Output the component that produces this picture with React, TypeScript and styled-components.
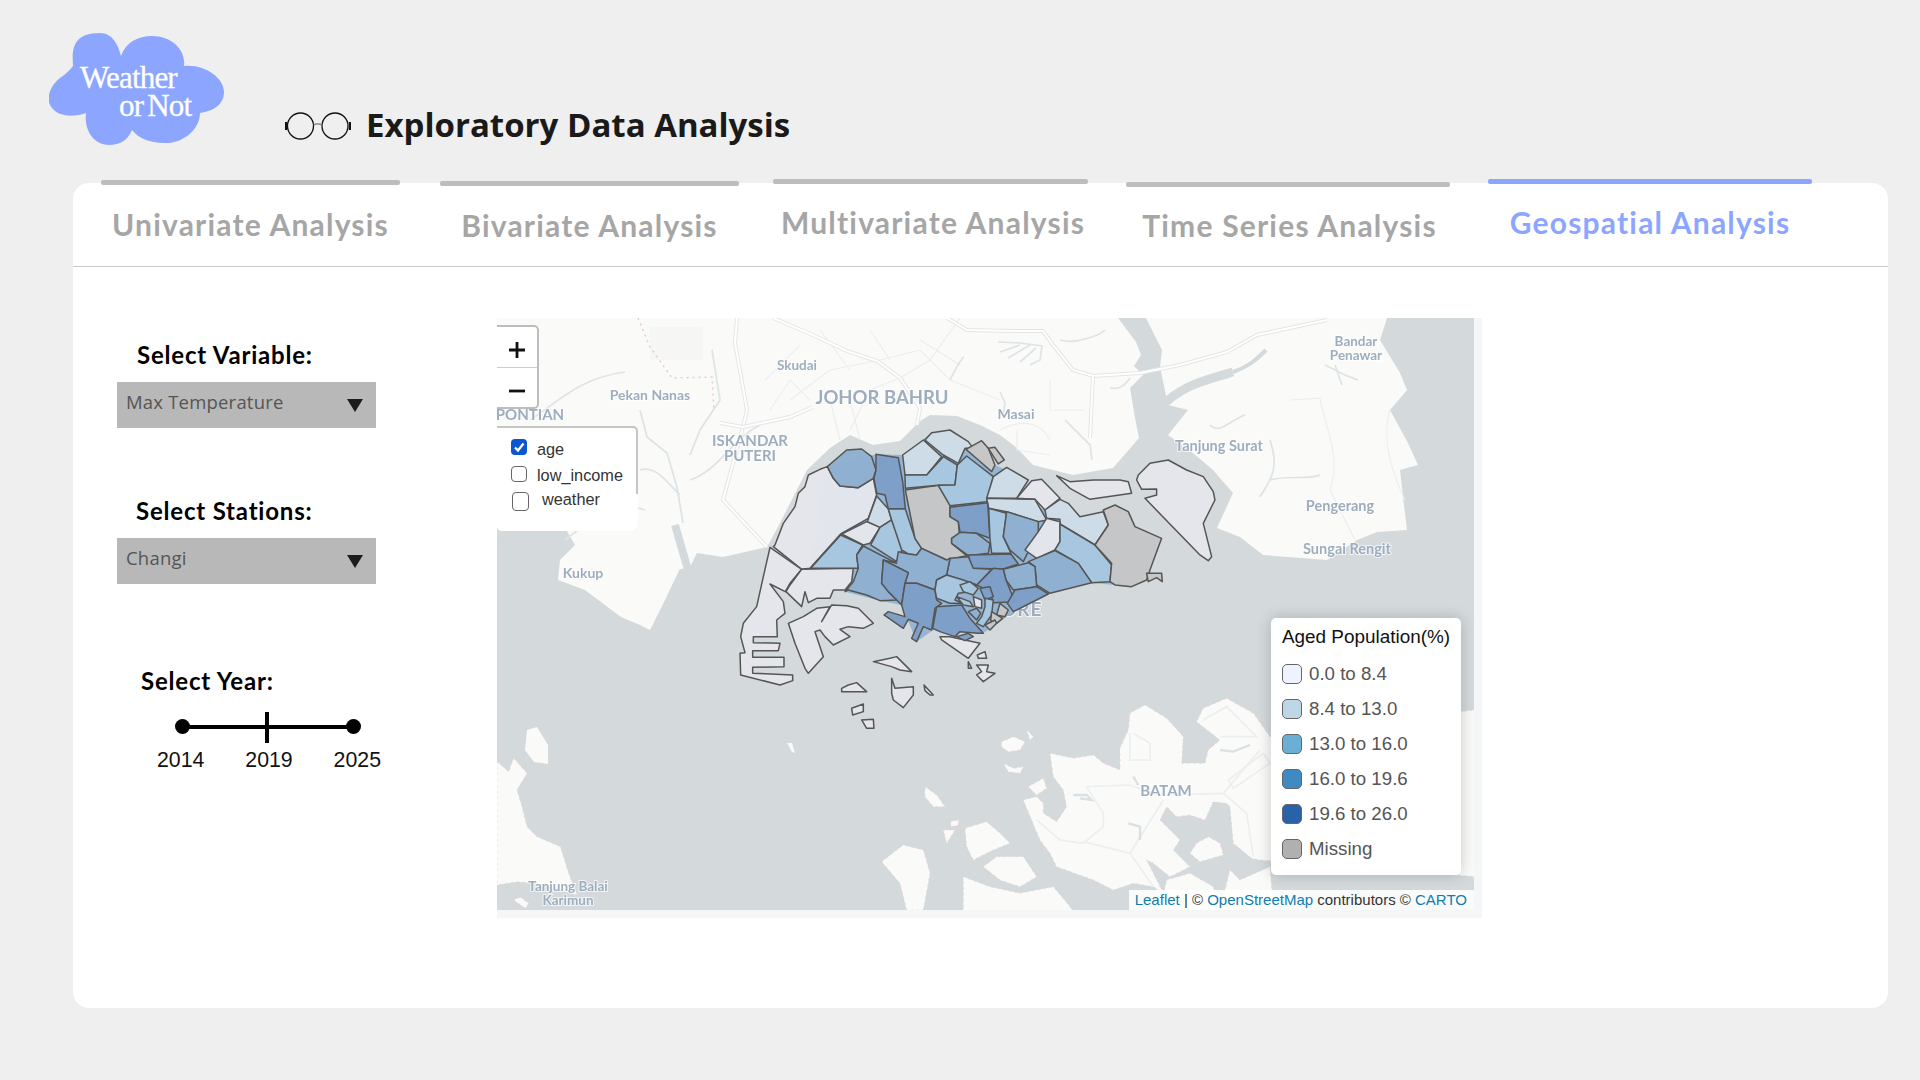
import React from 'react'
import styled, { createGlobalStyle } from 'styled-components'

const GlobalStyle = createGlobalStyle`
  html, body {
    margin: 0;
    padding: 0;
    background: #efefef;
  }
`

const Page = styled.div`
  width: 1920px;
  height: 1080px;
  overflow: hidden;
  background: #efefef;
  font-family: Lato, sans-serif;
`

const Header = styled.header`
  display: flex;
  align-items: flex-start;
  height: 183px;
  padding: 33px 0 0 49px;
  box-sizing: border-box;
`

const Logo = styled.div`
  position: relative;
  width: 175px;
  height: 112px;
  flex: none;

  svg {
    display: block;
  }
`

const LogoText = styled.div`
  position: absolute;
  left: 31px;
  top: 31px;
  color: #fff;
  font-family: 'Liberation Serif', serif;
  font-size: 31px;
  line-height: 28px;
  letter-spacing: -0.8px;
  -webkit-text-stroke: 0.3px #fff;
  white-space: nowrap;

  span {
    margin-left: 39px;
    word-spacing: -3px;
  }
`

const Glasses = styled.svg`
  flex: none;
  margin: 79px 15px 0 61px;
`

const Title = styled.h1`
  margin: 70px 0 0;
  font-family: 'Open Sans', sans-serif;
  font-size: 33px;
  line-height: 44px;
  font-weight: 700;
  color: #1a1a1a;
  white-space: nowrap;
`

const Card = styled.main`
  display: flow-root;
  width: 1815px;
  height: 825px;
  margin-left: 73px;
  background: #fff;
  border-radius: 16px;
`

const TabRow = styled.nav`
  display: flex;
  height: 88px;
  margin-top: -4px;
  box-sizing: border-box;
  position: relative;
  border-bottom: 1px solid #c9c9c9;
`

const Tab = styled.div<{
  $left: number
  $width: number
  $barTop: number
  $textTop: number
  $indent?: number
  $active?: boolean
}>`
  width: ${p => p.$width}px;
  margin-left: ${p => p.$left}px;
  padding-top: ${p => p.$barTop}px;
  flex: none;

  &::before {
    content: '';
    display: block;
    height: 5px;
    border-radius: 2px;
    background: ${p => (p.$active ? '#8ca6ff' : '#bdbdbd')};
  }

  span {
    display: block;
    margin-top: ${p => p.$textTop}px;
    padding-left: ${p => p.$indent ?? 0}px;
    text-align: center;
    font-size: 30px;
    line-height: 36px;
    font-weight: 700;
    letter-spacing: 1.2px;
    white-space: nowrap;
    color: ${p => (p.$active ? '#8ca6ff' : '#a6a6a6')};
  }
`

const Body = styled.div`
  display: flex;
  align-items: flex-start;
`

const Sidebar = styled.aside`
  width: 424px;
  flex: none;
  padding: 73px 0 0 44px;
  box-sizing: border-box;
`

const FieldLabel = styled.div<{ $left: number; $top?: number }>`
  margin: ${p => p.$top ?? 0}px 0 12px ${p => p.$left}px;
  font-size: 24px;
  line-height: 30px;
  font-weight: 700;
  letter-spacing: 0.8px;
  color: #000;
  white-space: nowrap;
`

const SelectBox = styled.div`
  display: flex;
  justify-content: space-between;
  width: 259px;
  height: 46px;
  padding: 0 13px 0 9px;
  box-sizing: border-box;
  background: #b8b8b8;
`

const SelectText = styled.span`
  margin-top: 6px;
  font-family: 'Open Sans', sans-serif;
  font-size: 18.5px;
  line-height: 28px;
  letter-spacing: 0.2px;
  color: #555;
`

const Caret = styled.i`
  width: 0;
  height: 0;
  margin-top: 17px;
  border-left: 8.5px solid transparent;
  border-right: 8.5px solid transparent;
  border-top: 13px solid #1c1c1c;
`

const Slider = styled.div`
  position: relative;
  width: 170px;
  height: 4px;
  margin: 29px 0 0 66px;
  background: #000;
`

const SliderDot = styled.i<{ $end?: boolean }>`
  position: absolute;
  top: -6px;
  ${p => (p.$end ? 'right: -8px;' : 'left: -8px;')}
  width: 15px;
  height: 15px;
  border-radius: 50%;
  background: #000;
`

const SliderTick = styled.i`
  position: absolute;
  top: -13px;
  left: 82px;
  width: 4px;
  height: 31px;
  background: #000;
`

const YearRow = styled.div`
  display: flex;
  justify-content: space-between;
  width: 224px;
  margin: 18px 0 0 40px;
  font-family: 'Liberation Sans', sans-serif;
  font-size: 21.3px;
  line-height: 26px;
  color: #111;
`

const MapFrame = styled.section`
  margin-top: 51px;
  padding: 0 8px 8px 0;
  background: #f5f6f7;
`

const MapWrap = styled.div`
  position: relative;
  width: 977px;
  height: 592px;
  overflow: hidden;
  font-family: 'Liberation Sans', sans-serif;
`

const MapSvg = styled.svg`
  display: block;
  filter: blur(0.4px);

  text {
    font-family: Lato, sans-serif;
    font-weight: 700;
    fill: #9dadbe;
    text-anchor: middle;
    paint-order: stroke;
    stroke: rgba(255, 255, 255, 0.7);
    stroke-width: 2px;
  }
`

const ZoomControl = styled.div`
  position: absolute;
  left: 0;
  top: 7px;
  width: 42px;
  height: 84px;
  box-sizing: border-box;
  border: 2px solid #bdbdbd;
  border-left: none;
  border-radius: 0 5px 5px 0;
  background: #fff;
`

const ZoomButton = styled.div<{ $top?: boolean }>`
  display: flex;
  align-items: center;
  justify-content: center;
  height: 41px;
  padding-top: 5px;
  box-sizing: border-box;
  ${p => (p.$top ? 'border-bottom: 1px solid #ccc;' : '')}
`

const LayerBox = styled.div`
  position: absolute;
  left: 0;
  top: 108px;
  width: 141px;
  height: 105px;
  box-sizing: border-box;
  padding: 11px 0 0 14px;
  background: #fff;
  border-top: 2px solid #c6c6c6;
  border-right: 2px solid #c6c6c6;
  border-radius: 0 5px 5px 5px;

  &::after {
    content: '';
    position: absolute;
    left: 0;
    right: -2px;
    top: 66px;
    bottom: 0;
    background: #fff;
    border-radius: 0 0 5px 5px;
  }
`

const LayerRow = styled.div<{ $gap: number; $top: number; $shift?: number }>`
  position: relative;
  z-index: 1;
  display: flex;
  align-items: center;
  gap: ${p => p.$gap}px;
  margin-top: ${p => p.$top}px;
  margin-left: ${p => p.$shift ?? 0}px;
  height: 16px;
  font-size: 16.3px;
  line-height: 16px;
  color: #333;
`

const LayerText = styled.span<{ $raise: number }>`
  margin-top: ${p => p.$raise}px;
`

const Check = styled.span<{ $on?: boolean; $big?: boolean }>`
  display: flex;
  align-items: center;
  justify-content: center;
  flex: none;
  width: ${p => (p.$big ? 17 : 16)}px;
  height: ${p => (p.$big ? 19 : 16)}px;
  box-sizing: border-box;
  border-radius: 4px;
  border: ${p => (p.$on ? 'none' : '1.4px solid #666')};
  background: ${p => (p.$on ? '#0b57d0' : '#fff')};
`

const Legend = styled.div`
  position: absolute;
  left: 774px;
  top: 300px;
  width: 190px;
  height: 257px;
  box-sizing: border-box;
  padding: 7px 0 0 11px;
  background: #fff;
  border-radius: 5px;
  box-shadow: 0 0 15px rgba(0, 0, 0, 0.2);
`

const LegendTitle = styled.div`
  margin-bottom: 7px;
  font-size: 18.9px;
  line-height: 24px;
  color: #111;
  white-space: nowrap;
`

const LegendRow = styled.div`
  display: flex;
  align-items: center;
  gap: 7px;
  height: 35px;
  font-size: 18.7px;
  color: #555;
`

const Swatch = styled.i<{ $color: string }>`
  width: 20px;
  height: 20px;
  box-sizing: border-box;
  border: 1.5px solid #666;
  border-radius: 5px;
  background: ${p => p.$color};
`

const Attribution = styled.div`
  position: absolute;
  right: 0;
  bottom: 0;
  height: 20px;
  padding: 0 7px 0 6px;
  background: rgba(255, 255, 255, 0.85);
  font-size: 15px;
  line-height: 20px;
  color: #333;
  white-space: nowrap;

  b {
    font-weight: 400;
    color: #0f7db0;
  }
`

const SEA = '#d4dadc'
const LAND = '#fafaf8'
const VLIGHT = '#e4e6ec'
const PALE = '#cfdde8'
const LIGHT = '#a6c7df'
const MID = '#8eb0d1'
const DARK = '#7d9ec6'
const GREY = '#c6c6c6'

const tabs = [
  { label: 'Univariate Analysis', left: 28, width: 299, barTop: 1, textTop: 21 },
  { label: 'Bivariate Analysis', left: 40, width: 299, barTop: 2, textTop: 21 },
  { label: 'Multivariate Analysis', left: 34, width: 315, barTop: 0, textTop: 20, indent: 5 },
  { label: 'Time Series Analysis', left: 38, width: 324, barTop: 3, textTop: 20, indent: 3 },
  { label: 'Geospatial Analysis', left: 38, width: 324, barTop: 0, textTop: 20, active: true },
]

const legendItems = [
  { label: '0.0 to 8.4', color: '#eff3ff' },
  { label: '8.4 to 13.0', color: '#bdd7e7' },
  { label: '13.0 to 16.0', color: '#6baed6' },
  { label: '16.0 to 19.6', color: '#3f8bc1' },
  { label: '19.6 to 26.0', color: '#2a62a8' },
  { label: 'Missing', color: '#b0b0b0' },
]

// land outlines, page pixels
const landShapes = [
  '497,318 1118,318 1136,342 1141,355 1134,366 1143,375 1130,388 1135,418 1139,438 1113,468 1073,475 1033,465 1017,448 1000,435 980,425 957,416 930,415 920,421 900,441 873,445 850,435 830,448 807,470 780,523 767,547 723,557 697,553 690,567 677,570 684,560 665,600 650,630 640,625 621,617 585,590 558,580 560,560 575,545 567,531 497,528',
  '1146,318 1387,318 1380,340 1400,373 1407,390 1390,410 1408,443 1418,465 1400,470 1403,497 1407,530 1377,532 1357,540 1327,560 1263,555 1240,537 1217,528 1233,493 1213,470 1193,453 1168,435 1188,410 1168,405 1160,367 1162,350',
  '527,730 537,727 548,745 548,764 534,762 525,750',
  '787,743 792,743 795,753 792,752',
]

// south-west corner, cropped 3x from x 497, y 740
const karimunShapes = [
  '0,65 35,95 50,55 90,100 60,150 75,200 90,260 120,290 190,320 215,400 240,465 120,430 60,425 0,435',
  '50,480 70,472 95,490 85,505',
]

// Batam and the islands round it, cropped 3x from x 880, y 680
const batamShapes = [
  '510,220 580,235 640,225 670,250 720,270 720,205 745,150 750,100 795,75 860,115 910,170 905,250 975,250 985,210 1020,180 950,125 970,85 1040,55 1120,100 1170,170 1785,90 1785,590 1140,540 1115,535 1060,490 1050,380 1040,370 1000,365 975,420 930,405 890,410 860,380 840,420 870,450 900,480 880,510 930,560 870,590 820,550 800,540 850,640 820,620 760,610 700,630 640,600 530,560 510,520 480,480 430,360 470,350 490,370 490,400 530,425 560,380 550,330 520,290',
  '950,490 985,470 1020,490 1030,525 960,545 930,520',
  '860,600 930,580 1000,620 1020,690 840,690',
  '1020,690 1050,570 1080,600 1170,560 1180,690',
  '135,320 170,345 195,380 160,380 135,350',
  '365,185 400,170 435,185 420,210 385,215 365,200',
  '440,150 460,170 450,180',
  '445,320 490,295 500,325 470,345',
  '255,445 320,425 360,460 390,490 340,510 280,540 260,500',
  '5,545 70,495 130,510 150,580 130,690 80,690 60,610',
  '250,590 330,620 420,640 520,620 570,680 580,695 250,695',
  '310,560 350,530 430,530 470,590 420,620 360,600',
  '210,425 235,420 235,435 215,440',
  '190,450 225,450 200,490',
  '370,250 400,265 430,260 420,280 385,275',
]

const batamRoads = [
  'M620 320 L750 315 L830 345 L1030 340 L1140 210',
  'M620 320 L670 400 L670 440 L610 490 L540 480 L470 420',
  'M610 485 L750 520 L850 360',
  'M750 520 L820 620',
  'M1030 340 L1100 400 L1120 530',
  'M760 160 L810 190 L810 240 L750 240 L750 160',
  'M970 120 L1040 80 L1130 170 L1020 170',
  'M1045 300 L1150 220 L1170 250 L1060 325 Z',
]

const batamWater = [
  'M580 345 L620 345 L635 360 L600 355',
  'M745 430 L780 440 L780 480',
  'M760 290 L775 315',
  'M1020 210 L1060 215 L1110 195',
]

const rivers = [
  'M530 420 C560 400 580 378 625 372',
  'M640 410 L647 437 L667 453 L677 487 L683 523',
  'M640 470 C655 465 665 480 680 495',
  'M712 350 L720 400 L700 430 L690 455',
  'M690 480 C720 470 730 440 760 425',
  'M565 540 C590 520 620 500 645 510',
  'M1260 497 C1270 480 1280 470 1270 440 M1270 480 C1285 475 1310 480 1320 475',
  'M1325 365 L1345 375 L1358 380 M1335 365 L1342 385',
  'M1210 425 C1220 435 1230 420 1245 415',
  'M1060 340 C1075 345 1100 335 1105 330',
  'M950 380 C955 370 962 358 964 357',
  'M1000 392 L1005 403 L1003 415',
  'M1065 420 L1090 445 L1092 460',
  'M1110 388 C1120 390 1125 385 1130 378',
  'M998 342 L1020 343 L1042 346 L1040 360 L1030 365 M1000 352 L1020 345 M1008 358 L1030 345 M1020 362 L1036 348',
]

const lanes = [
  'M790 400 L830 370 L880 360',
  'M850 400 L860 440',
  'M900 378 L870 390 L850 430',
  'M880 360 L920 350 L950 380 L1000 400',
  'M820 330 L850 370',
  'M960 318 L930 360 L900 378',
  'M1050 380 L1050 410 L1085 410',
  'M1000 430 C1020 420 1040 420 1050 440 M1017 430 L1017 450 L1050 455',
  'M1320 400 C1330 440 1340 460 1330 490 L1355 540',
  'M1290 400 L1322 398',
  'M1390 410 C1380 440 1395 480 1405 500',
  'M770 410 L790 380 L810 400 M765 380 L800 345',
  'M830 400 L840 440 M870 330 L890 360 M920 340 L960 365',
]

const roads = [
  'M737 318 L735 343 L747 410 L743 427 L723 500 L767 547',
  'M720 423 L743 427 L790 417 L813 407',
  'M773 318 L813 335 L847 351 L877 361 L900 378 L920 408 L917 425',
  'M947 318 L967 330 L1013 331 L1043 331 L1053 345 L1073 370 L1093 376 L1140 373 L1180 365 L1227 352 L1257 335 L1327 320',
  'M1093 376 L1090 438',
]

// fills the slivers left between the planning areas
const mainlandBase =
  '322,170 468,133 548,135 635,68 690,60 825,165 925,210 890,265 975,300 1080,320 1150,305 1325,385 1290,480 1235,530 1115,518 990,550 880,605 790,670 640,660 590,695 545,585 480,572 375,545 400,475 272,475'

const regionShapes: [string, string][] = [
  [VLIGHT, '322,170 300,178 265,195 255,230 235,250 225,290 190,340 165,405 160,410 245,478 270,475 362,372 445,325 470,255 460,205 415,233 360,228 340,205'],
  [VLIGHT, '150,412 245,478 210,520 196,545 150,522 190,575 195,610 170,630 172,680 100,680 100,698 180,700 175,722 98,722 98,742 192,742 192,770 98,772 98,790 218,795 218,812 180,825 62,795 60,730 75,728 62,680 70,640 110,590 130,500'],
  [VLIGHT, '245,478 400,475 395,515 375,540 340,540 330,565 290,565 265,578 255,545 245,590 198,545 210,525'],
  [VLIGHT, '205,640 250,620 290,595 330,590 305,635 335,585 380,587 415,595 460,640 430,655 385,650 360,658 390,680 340,705 315,680 300,660 285,665 310,740 265,790 255,775 225,700'],
  [MID, '322,170 380,120 425,117 455,140 468,180 460,205 415,233 360,228 340,205'],
  [DARK, '468,133 535,143 548,215 556,297 505,297 495,255 470,250 462,205 468,180'],
  [LIGHT, '362,375 428,405 410,435 415,475 272,475'],
  [VLIGHT, '365,372 440,335 480,352 450,400 430,405'],
  [PALE, '470,258 505,297 515,330 480,352 442,335'],
  [LIGHT, '515,330 535,380 548,415 530,455 452,405 480,352'],
  [LIGHT, '505,297 556,297 585,385 605,415 590,435 565,432 545,420 515,330'],
  [GREY, '556,240 655,226 690,285 690,320 715,335 718,370 695,385 695,400 740,437 680,450 605,415 585,385'],
  [PALE, '548,135 610,90 665,140 620,195 555,195'],
  [PALE, '615,90 635,68 690,60 745,95 760,115 735,115 715,160 670,135'],
  [LIGHT, '555,195 620,195 670,140 712,165 705,225 655,226 556,235'],
  [LIGHT, '712,165 740,138 820,200 800,275 690,287 655,226 705,225'],
  [GREY, '738,118 785,92 805,115 825,165 815,185 775,150'],
  [GREY, '805,115 825,112 853,150 835,162'],
  [PALE, '820,200 860,172 925,210 890,265 800,265'],
  [VLIGHT, '890,265 935,212 965,208 1020,265 975,300 945,268'],
  [PALE, '800,265 945,268 980,330 955,335 860,305 806,295'],
  [PALE, '975,300 1020,268 1045,280 1080,320 1150,305 1165,345 1125,405 1020,342 1020,328 980,325'],
  [DARK, '690,292 803,278 810,385 770,370 720,367 715,335 690,320'],
  [LIGHT, '806,295 860,310 850,380 873,430 815,430 810,385'],
  [MID, '860,305 955,335 955,365 910,455 870,420 850,380'],
  [VLIGHT, '980,325 1020,335 1020,395 1005,420 950,445 915,420 955,365'],
  [LIGHT, '1020,342 1125,405 1175,465 1170,515 1115,518 1075,460 1005,420 1020,395'],
  [GREY, '1150,300 1185,285 1225,305 1245,350 1325,385 1290,480 1280,510 1235,530 1185,525 1170,515 1175,460 1125,405 1165,345'],
  [GREY, '1280,490 1325,490 1327,515 1310,503 1285,515'],
  [VLIGHT, '1010,197 1050,215 1120,210 1200,210 1225,215 1235,250 1110,268 1050,235'],
  [VLIGHT, '1255,195 1290,160 1345,150 1400,180 1450,200 1480,245 1485,270 1450,340 1475,440 1465,452 1440,435 1275,265 1310,255 1310,237 1265,238 1250,210'],
  [MID, '695,385 720,367 770,370 810,400 805,430 745,437 695,400'],
  [DARK, '745,435 873,432 895,462 850,477 755,475'],
  [MID, '925,455 1005,422 1075,460 1115,518 990,550 950,525 945,470'],
  [MID, '850,478 925,458 945,470 950,530 880,540 858,510'],
  [DARK, '820,475 850,478 858,510 885,575 820,578 810,545 770,525'],
  [DARK, '885,540 950,530 985,552 880,605 862,580'],
  [MID, '690,445 745,440 760,475 815,478 770,525 680,495'],
  [MID, '535,425 565,432 590,435 605,415 680,450 690,445 680,495 650,510 645,540 590,520 555,520 565,488 490,450 530,455'],
  [MID, '430,408 530,460 490,450 485,520 505,545 530,570 480,572 440,555 385,540 375,545 400,515 415,475 410,435'],
  [DARK, '490,450 565,488 555,520 545,585 505,545 485,520'],
  [DARK, '555,520 590,520 645,540 650,570 665,580 645,595 635,660 610,650 590,695 575,685 595,640 565,628 550,655 492,615 505,605 555,620 545,585'],
  [LIGHT, '680,495 730,510 770,525 750,545 715,550 705,570 730,580 690,580 650,565 645,540 650,510'],
  [DARK, '650,590 725,585 750,625 790,670 775,670 720,665 705,680 660,665 638,655'],
  [LIGHT, '720,525 750,515 775,535 760,555 730,545'],
  [DARK, '780,535 810,530 820,560 795,570'],
  [VLIGHT, '760,560 785,570 785,595 765,590'],
  [LIGHT, '710,560 750,575 760,590 730,585'],
  [MID, '745,605 770,595 782,610 770,630'],
  [LIGHT, '795,565 820,570 815,615 790,650 770,640 785,620 795,590'],
  [GREY, '840,580 865,600 855,620 830,615'],
  [GREY, '815,605 848,625 830,640 812,632'],
  [GREY, '795,645 825,630 830,640 810,660'],
  [VLIGHT, '660,680 690,680 780,700 745,745 665,690'],
  [DARK, '710,680 745,670 760,680 735,692'],
  [VLIGHT, '460,755 510,745 530,740 575,785 540,780 515,770'],
  [VLIGHT, '365,835 385,825 410,818 440,845 365,845'],
  [VLIGHT, '515,805 525,835 580,830 580,855 550,893 520,870 515,850'],
  [VLIGHT, '612,825 640,855 630,855 615,842'],
  [VLIGHT, '395,895 430,882 430,905 398,915'],
  [VLIGHT, '425,930 460,928 462,955 440,955'],
  [VLIGHT, '772,735 795,725 800,745 775,745'],
  [VLIGHT, '745,755 755,775 745,775'],
  [VLIGHT, '770,765 805,765 800,785 825,790 790,815 770,795 785,785'],
]

const mapLabels = [
  { text: 'Skudai', x: 797, y: 370, size: 13.5 },
  { text: 'JOHOR BAHRU', x: 882, y: 404, size: 18.5 },
  { text: 'Pekan Nanas', x: 650, y: 400, size: 14 },
  { text: 'PONTIAN', x: 530, y: 420, size: 15 },
  { text: 'ISKANDAR', x: 750, y: 446, size: 15 },
  { text: 'PUTERI', x: 750, y: 461, size: 15 },
  { text: 'Kukup', x: 583, y: 578, size: 14 },
  { text: 'Masai', x: 1016, y: 419, size: 14 },
  { text: 'Tanjung Surat', x: 1219, y: 451, size: 14.5 },
  { text: 'Bandar', x: 1356, y: 346, size: 13.5 },
  { text: 'Penawar', x: 1356, y: 360, size: 13.5 },
  { text: 'Pengerang', x: 1340, y: 511, size: 14.5 },
  { text: 'Sungai Rengit', x: 1347, y: 554, size: 14.5 },
  { text: 'BATAM', x: 1166, y: 796, size: 15 },
  { text: 'Tanjung Balai', x: 568, y: 891, size: 13.5 },
  { text: 'Karimun', x: 568, y: 905, size: 13.5 },
]

function SingaporeMap() {
  return (
    <MapSvg width="977" height="592" viewBox="497 318 977 592">
      <rect x="497" y="318" width="977" height="592" fill={SEA} />
      {landShapes.map(points => (
        <polygon key={points} points={points} fill={LAND} />
      ))}
      <rect x="650" y="327" width="53" height="33" fill="#f6f7f5" />
      <g transform="translate(497 740) scale(0.3333)" stroke="#eccdd0" strokeWidth="3" strokeDasharray="4 14">
        {karimunShapes.map(points => (
          <polygon key={points} points={points} fill={LAND} />
        ))}
      </g>
      <g transform="translate(880 680) scale(0.3333)">
        <g stroke="#eccdd0" strokeWidth="3" strokeDasharray="4 14">
          {batamShapes.map(points => (
            <polygon key={points} points={points} fill={LAND} />
          ))}
        </g>
        {batamRoads.map(d => (
          <path key={d} d={d} fill="none" stroke="#ecefef" strokeWidth="5" />
        ))}
        {batamWater.map(d => (
          <path key={d} d={d} fill="none" stroke="#d9e1e5" strokeWidth="7" />
        ))}
      </g>
      <path d="M1166 402 C1185 385 1205 380 1233 372" fill="none" stroke={SEA} strokeWidth="9" />
      <path d="M1233 372 C1250 366 1258 358 1266 350" fill="none" stroke={SEA} strokeWidth="4" />
      <path d="M675 525 L688 570" fill="none" stroke={SEA} strokeWidth="8" />
      {lanes.map(d => (
        <path key={d} d={d} fill="none" stroke="#eceeee" strokeWidth="1.1" />
      ))}
      {rivers.map(d => (
        <path key={d} d={d} fill="none" stroke="#dde4e7" strokeWidth="1.7" />
      ))}
      {roads.map(d => (
        <g key={d} fill="none">
          <path d={d} stroke="#e4e6e6" strokeWidth="4" />
          <path d={d} stroke="#fff" strokeWidth="2" />
        </g>
      ))}
      <path
        d="M638 318 L650 347 L672 378 L712 377 L714 410"
        fill="none"
        stroke="#e9c9cd"
        strokeWidth="1.5"
        strokeDasharray="2 4"
      />
      {mapLabels.map(label => (
        <text key={label.text} x={label.x} y={label.y} fontSize={label.size}>
          {label.text}
        </text>
      ))}
      <text x="984" y="616" fontSize="19" letterSpacing="1">
        SINGAPORE
      </text>
      <g transform="translate(720 410) scale(0.3333)" stroke="#555" strokeWidth="4.5" strokeLinejoin="round">
        <polygon points={mainlandBase} fill={MID} fillOpacity="0.9" stroke="none" />
        {regionShapes.map(([fill, points]) => (
          <polygon key={points} points={points} fill={fill} fillOpacity="0.97" />
        ))}
      </g>
    </MapSvg>
  )
}

export default function App() {
  return (
    <Page>
      <GlobalStyle />
      <Header>
        <Logo>
          <svg width="175" height="112" viewBox="49 33 175 112">
            <path
              fill="#8ca6ff"
              d="M100 33 C112 33 118 44 121 56 C126 42 138 36 152 36 C172 36 186 50 184 66 C205 64 224 78 224 92 C224 104 214 111 200 113 C200 130 182 144 164 143 C150 143 138 138 132 130 C128 140 120 145 109 145 C92 145 84 128 86 113 C72 118 58 116 52 108 C44 98 52 84 60 78 C66 74 70 70 73 66 C72 50 72 33 100 33 Z"
            />
          </svg>
          <LogoText>
            Weather
            <br />
            <span>or Not</span>
          </LogoText>
        </Logo>
        <Glasses width="66" height="28" viewBox="0 0 66 28">
          <g fill="none" stroke="#111" strokeWidth="1.3">
            <circle cx="15.5" cy="14" r="13" />
            <circle cx="50" cy="14" r="13" />
            <path d="M28.5 13 C31 11.5 34 11.5 37 13" stroke="#777" />
          </g>
          <rect x="0" y="10" width="2.2" height="8" fill="#111" />
          <rect x="63.8" y="10" width="2.2" height="8" fill="#111" />
        </Glasses>
        <Title>Exploratory Data Analysis</Title>
      </Header>
      <Card>
        <TabRow>
          {tabs.map(tab => (
            <Tab
              key={tab.label}
              $left={tab.left}
              $width={tab.width}
              $barTop={tab.barTop}
              $textTop={tab.textTop}
              $indent={tab.indent}
              $active={tab.active}
            >
              <span>{tab.label}</span>
            </Tab>
          ))}
        </TabRow>
        <Body>
          <Sidebar>
            <FieldLabel $left={20}>Select Variable:</FieldLabel>
            <SelectBox>
              <SelectText>Max Temperature</SelectText>
              <Caret />
            </SelectBox>
            <FieldLabel $left={19} $top={68}>Select Stations:</FieldLabel>
            <SelectBox>
              <SelectText>Changi</SelectText>
              <Caret />
            </SelectBox>
            <FieldLabel $left={24} $top={82}>Select Year:</FieldLabel>
            <Slider>
              <SliderDot />
              <SliderTick />
              <SliderDot $end />
            </Slider>
            <YearRow>
              <span>2014</span>
              <span>2019</span>
              <span>2025</span>
            </YearRow>
          </Sidebar>
          <MapFrame>
            <MapWrap>
              <SingaporeMap />
              <ZoomControl>
                <ZoomButton $top>
                  <svg width="18" height="18" viewBox="0 0 18 18">
                    <path d="M1 9 H17 M9 1 V17" stroke="#111" strokeWidth="2.8" />
                  </svg>
                </ZoomButton>
                <ZoomButton>
                  <svg width="18" height="18" viewBox="0 0 18 18">
                    <path d="M1 9 H17" stroke="#111" strokeWidth="2.8" />
                  </svg>
                </ZoomButton>
              </ZoomControl>
              <LayerBox>
                <LayerRow $gap={10} $top={0}>
                  <Check $on>
                    <svg width="12" height="12" viewBox="0 0 12 12">
                      <path d="M2 6.5 L5 9.5 L10.5 2.5" fill="none" stroke="#fff" strokeWidth="2.2" />
                    </svg>
                  </Check>
                  <LayerText $raise={4}>age</LayerText>
                </LayerRow>
                <LayerRow $gap={10} $top={11}>
                  <Check />
                  <LayerText $raise={2}>low_income</LayerText>
                </LayerRow>
                <LayerRow $gap={13} $top={11} $shift={1}>
                  <Check $big />
                  <LayerText $raise={-4}>weather</LayerText>
                </LayerRow>
              </LayerBox>
              <Legend>
                <LegendTitle>Aged Population(%)</LegendTitle>
                {legendItems.map(item => (
                  <LegendRow key={item.label}>
                    <Swatch $color={item.color} />
                    {item.label}
                  </LegendRow>
                ))}
              </Legend>
              <Attribution>
                <b>Leaflet</b> | © <b>OpenStreetMap</b> contributors © <b>CARTO</b>
              </Attribution>
            </MapWrap>
          </MapFrame>
        </Body>
      </Card>
    </Page>
  )
}
